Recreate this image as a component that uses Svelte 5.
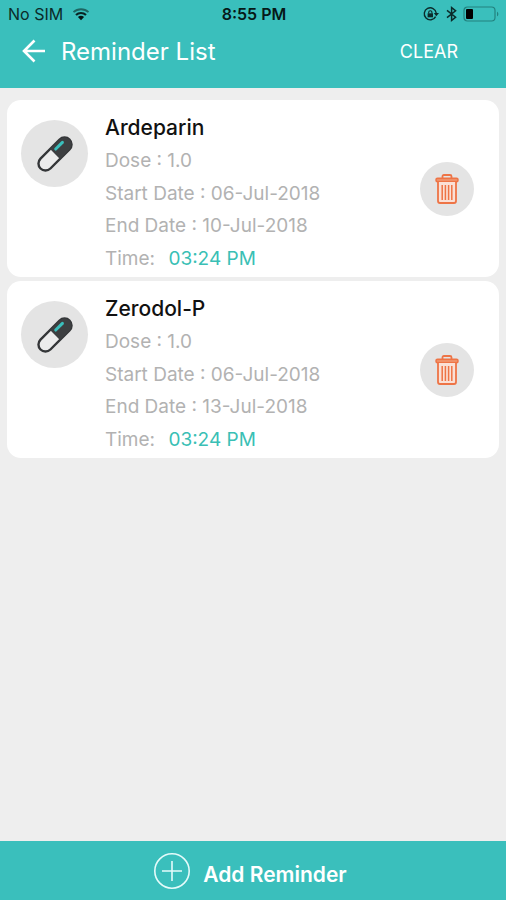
<script>
  let reminders = $state([
    { name: 'Ardeparin', dose: '1.0', start: '06-Jul-2018', end: '10-Jul-2018', time: '03:24 PM' },
    { name: 'Zerodol-P', dose: '1.0', start: '06-Jul-2018', end: '13-Jul-2018', time: '03:24 PM' }
  ]);

  const remove = (item) => (reminders = reminders.filter((r) => r !== item));
  const clear = () => (reminders = []);
</script>

<div class="screen">
  <header>
    <div class="status">
      <div class="carrier">
        <span>No SIM</span>
        <svg width="18" height="14" viewBox="0 0 18 14" fill="none" aria-hidden="true">
          <path d="M1.5 5.2a11 11 0 0 1 15 0" stroke="#1d6663" stroke-width="1.8" />
          <path d="M4 8a7.3 7.3 0 0 1 10 0" stroke="#0a2423" stroke-width="2.2" />
          <path d="M9 13.2 5.9 10.1a4.5 4.5 0 0 1 6.2 0Z" fill="#061514" />
        </svg>
      </div>
      <strong>8:55 PM</strong>
      <div class="indicators">
        <svg width="17" height="14" viewBox="0 0 17 14" fill="none" stroke="#0b2b2a" aria-hidden="true">
          <path d="M12.6 9.6A6 6 0 1 1 13.2 6" stroke-width="1.4" />
          <path d="m10.8 6 2.5 3.2L16 6Z" fill="#0b2b2a" stroke="none" />
          <rect x="4.6" y="6.3" width="5.4" height="4" fill="#0b2b2a" stroke="none" />
          <path d="M5.7 6.5V5.3a1.6 1.6 0 0 1 3.2 0v1.2" stroke-width="1.1" />
        </svg>
        <svg width="11" height="16" viewBox="0 0 11 16" fill="none" stroke="#0b2b2a" stroke-width="1.5" aria-hidden="true">
          <path d="m1 4.4 8.6 6.8-4 3.3v-13l4 3.3L1 11.6" />
        </svg>
        <svg width="37" height="16" viewBox="0 0 37 16" fill="none" aria-hidden="true">
          <rect x="1" y="1" width="31" height="14" rx="3.5" stroke="#23827f" stroke-width="1.2" />
          <rect x="3" y="3" width="7" height="10" rx="1" fill="#000" />
          <path d="M34 5.7c1.8.6 1.8 4 0 4.6Z" fill="#23827f" />
        </svg>
      </div>
    </div>
    <nav>
      <button class="back" aria-label="Back">
        <svg width="24" height="24" viewBox="0 0 24 24" fill="none" stroke="#fff" stroke-width="2.6" aria-hidden="true">
          <path d="M23 12H2M12.5 1.5 2 12l10.5 10.5" />
        </svg>
      </button>
      <h1>Reminder List</h1>
      <button class="clear" onclick={clear}>CLEAR</button>
    </nav>
  </header>

  <main>
    {#each reminders as item}
      <article>
        <div class="pill">
          <svg width="38" height="38" viewBox="0 0 38 38" fill="none" aria-hidden="true">
            <g transform="rotate(45 19 19)">
              <rect x="12" y="-1.5" width="14" height="41" rx="7" fill="#ececec" stroke="#343638" stroke-width="2.4" />
              <path d="M12 19V5.500a7 7 0 0 1 14 0V19Z" fill="#3d3f41" />
              <path d="M16 5.5v9.500" stroke="#3abfbc" stroke-width="3" stroke-linecap="round" />
            </g>
          </svg>
        </div>
        <div class="details">
          <h2>{item.name}</h2>
          <p>Dose : {item.dose}</p>
          <p>Start Date : {item.start}</p>
          <p>End Date : {item.end}</p>
          <p>Time: <time>{item.time}</time></p>
        </div>
        <button class="delete" aria-label="Delete {item.name}" onclick={() => remove(item)}>
          <svg width="24" height="30" viewBox="0 0 24 30" fill="none" stroke="#ee7446" aria-hidden="true">
            <path d="M7.500 4V2.500q0-1.500 1.500-1.500h6q1.500 0 1.500 1.500V4" stroke-width="1.8" />
            <rect x="1" y="4.2" width="22" height="3.6" rx="1.5" fill="#f09068" stroke-width="1.5" />
            <path d="M3 8v19q0 2 2 2h14q2 0 2-2V8" fill="#fae0d6" stroke-width="1.8" />
            <path d="M7.200 11v15M10.400 11v15M13.600 11v15M16.800 11v15" stroke-width="1.5" />
          </svg>
        </button>
      </article>
    {/each}
  </main>

  <button class="add">
    <svg width="38" height="38" viewBox="0 0 38 38" fill="none" stroke="#e4fbfa" stroke-width="1.6" aria-hidden="true">
      <circle cx="19" cy="19" r="17.2" />
      <path d="M19 9v20M9 19h20" />
    </svg>
    <span>Add Reminder</span>
  </button>
</div>

<style>
  :global(body) {
    margin: 0;
  }
  .screen {
    display: flex;
    flex-direction: column;
    min-height: 100vh;
    background: #eee;
    font-family: Inter, 'Liberation Sans', sans-serif;
  }
  button {
    padding: 0;
    border: 0;
    background: none;
    color: #fff;
    font: inherit;
    cursor: pointer;
  }
  svg {
    display: block;
    flex: none;
    overflow: visible;
  }
  h1,
  h2,
  p {
    margin: 0;
    font-weight: 400;
  }
  header {
    height: 88px;
    background: #3abfbc;
  }
  .status {
    display: grid;
    grid-template-columns: 1fr auto 1fr;
    align-items: center;
    height: 28px;
    padding: 0 6px 0 8px;
    color: #0b2b2a;
    font-size: 16px;
  }
  .status strong {
    color: #061918;
    font-weight: 600;
  }
  .carrier,
  .indicators {
    display: flex;
    align-items: center;
    gap: 9px;
  }
  .indicators {
    justify-content: flex-end;
    gap: 6px;
  }
  nav {
    display: flex;
    align-items: center;
    height: 46px;
    padding: 0 48px 0 22px;
  }
  h1 {
    flex: 1;
    margin-left: 15px;
    color: #fff;
    font-size: 24px;
    font-weight: 400;
  }
  .clear {
    font-size: 18px;
  }
  main {
    display: flex;
    flex: 1;
    flex-direction: column;
    gap: 4px;
    padding: 12px 7px;
  }
  article {
    display: flex;
    min-height: 177px;
    box-sizing: border-box;
    padding: 12px 25px 2px 14px;
    border-radius: 14px;
    background: #fff;
  }
  .pill,
  .delete {
    display: grid;
    flex: none;
    place-items: center;
    border-radius: 50%;
    background: #e4e4e4;
  }
  .pill {
    width: 67px;
    height: 67px;
    margin-top: 8px;
  }
  .delete {
    width: 54px;
    height: 54px;
    margin-top: 50px;
  }
  .details {
    display: flex;
    flex: 1;
    flex-direction: column;
    justify-content: space-between;
    margin-left: 17px;
    color: #b2b2b2;
    font-size: 19px;
    line-height: 32px;
  }
  h2 {
    color: #111;
    font-size: 21px;
    font-weight: 500;
  }
  time {
    margin-left: 8px;
    color: #3abfb5;
  }
  .add {
    display: flex;
    align-items: center;
    justify-content: center;
    gap: 12px;
    height: 59px;
    padding-right: 6px;
    background: #3abfbc;
    font-size: 21px;
    font-weight: 600;
  }
  .add span {
    padding-top: 8px;
  }
</style>
